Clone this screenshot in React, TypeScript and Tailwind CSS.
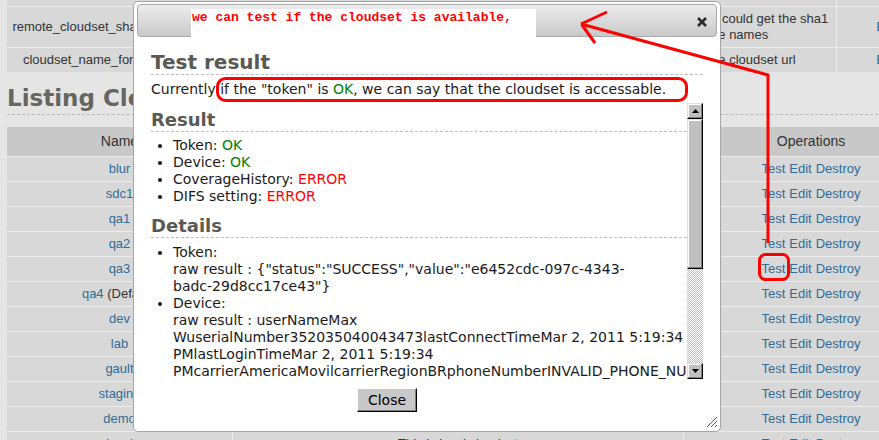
import React from "react";

const cloudsets = [
  { name: "blur" },
  { name: "sdc1" },
  { name: "qa1" },
  { name: "qa2" },
  { name: "qa3" },
  { name: "qa4", note: " (Default)" },
  { name: "dev" },
  { name: "lab" },
  { name: "gault" },
  { name: "staging" },
  { name: "demo" },
  { name: "local", desc: "This is local cloudset" },
];

const cell = "flex items-center justify-center bg-[#d8d8d8]";
const link = "text-[#2e6c99]";

function Scrollbar() {
  const raised =
    "border border-t-[#e0e0e0] border-l-[#e0e0e0] border-r-black border-b-black bg-[#c0c0c0] shadow-[inset_-1px_-1px_#808080,inset_1px_1px_#ffffff]";
  return (
    <div className="flex w-[16px] flex-col">
      <div className={`flex h-[16px] items-center justify-center ${raised}`}>
        <svg width="7" height="4" viewBox="0 0 7 4">
          <polygon points="3.5,0 7,4 0,4" fill="#000" />
        </svg>
      </div>
      <div className={`h-[150px] ${raised}`} />
      <div className="flex-1 bg-[repeating-conic-gradient(#c0c0c0_0%_25%,#ffffff_0%_50%)] bg-[length:2px_2px]" />
      <div className={`flex h-[16px] items-center justify-center ${raised}`}>
        <svg width="7" height="4" viewBox="0 0 7 4">
          <polygon points="0,0 7,0 3.5,4" fill="#000" />
        </svg>
      </div>
    </div>
  );
}

function TestDialog() {
  return (
    <div className="absolute left-[133px] top-px flex h-[431px] w-[588px] flex-col rounded-[5px] border border-[#a6a6a6] bg-white px-[3px] pt-[2px] font-['DejaVu_Sans',Verdana,sans-serif] text-[14px] text-[#1a1a1a]">
      <div className="flex h-[33px] items-center justify-end rounded-[4px] border border-[#aaaaaa] bg-gradient-to-b from-[#ececec] to-[#c9c9c9] pr-[9px]">
        <svg className="mt-[3px]" width="10" height="10" viewBox="0 0 10 10">
          <path d="M1 1L9 9M9 1L1 9" stroke="#2a2a2a" strokeWidth="2.6" />
        </svg>
      </div>

      <div className="flex flex-1 flex-col px-[14px]">
        <h1 className="mt-[13px] border-b border-dashed border-[#bdbdbd] text-[20px] font-bold leading-[24px] text-[#5a5a54]">
          Test result
        </h1>
        <p className="mt-[6px] leading-[17px]">
          Currently if the "token" is <span className="text-[#008000]">OK</span>, we can say that the cloudset is accessable.
        </p>

        <div className="mt-[5px] flex h-[276px]">
          <div className="min-w-0 flex-1 overflow-hidden pt-[6px] leading-[17px]">
            <h2 className="border-b border-dashed border-[#bdbdbd] text-[18px] font-bold leading-[22px] text-[#5a5a54]">Result</h2>
            <ul className="mt-[5px] list-disc pl-[22px]">
              <li>
                Token: <span className="text-[#008000]">OK</span>
              </li>
              <li>
                Device: <span className="text-[#008000]">OK</span>
              </li>
              <li>
                CoverageHistory: <span className="text-[#ff0000]">ERROR</span>
              </li>
              <li>
                DIFS setting: <span className="text-[#ff0000]">ERROR</span>
              </li>
            </ul>
            <h2 className="mt-[10px] border-b border-dashed border-[#bdbdbd] text-[18px] font-bold leading-[22px] text-[#5a5a54]">Details</h2>
            <ul className="mt-[6px] list-disc whitespace-nowrap pl-[22px]">
              <li>
                Token:
                <br />
                raw result : {'{"status":"SUCCESS","value":"e6452cdc-097c-4343-'}
                <br />
                {'badc-29d8cc17ce43"}'}
              </li>
              <li>
                Device:
                <br />
                raw result : userNameMax
                <br />
                WuserialNumber352035040043473lastConnectTimeMar 2, 2011 5:19:34
                <br />
                PMlastLoginTimeMar 2, 2011 5:19:34
                <br />
                PMcarrierAmericaMovilcarrierRegionBRphoneNumberINVALID_PHONE_NUMBER
              </li>
            </ul>
          </div>
          <Scrollbar />
        </div>

        <div className="mt-[9px]">
          <button className="ml-[206px] h-[24px] w-[60px] border border-t-white border-l-white border-r-black border-b-black bg-[#c8c8c8] text-[14px] text-black shadow-[inset_-1px_-1px_#808080]">
            Close
          </button>
        </div>
      </div>

      <svg className="absolute bottom-[3px] right-[2px]" width="12" height="12" viewBox="0 0 12 12">
        <path d="M11 1L1 11M11 5L5 11M11 9L9 11" stroke="#555" strokeWidth="1" />
      </svg>
    </div>
  );
}

function Annotations() {
  return (
    <>
      <div className="absolute left-[191px] top-[9px] h-[28px] w-[345px] bg-white pl-px pt-px font-['Liberation_Mono',monospace] text-[13px] font-bold leading-[15px] text-[#ff0000]">
        we can test if the cloudset is available,
      </div>
      <svg className="pointer-events-none absolute left-0 top-0" width="879" height="440">
        <g stroke="#ff0000" strokeWidth="3" fill="none" strokeLinejoin="round">
          <rect x="217.5" y="78.5" width="469" height="22" rx="8" />
          <polyline points="581,24 768,75 768,243" />
          <line x1="581" y1="24" x2="607" y2="12" />
          <line x1="582" y1="25" x2="595" y2="43" />
          <rect x="759.5" y="254.5" width="29" height="25" rx="6" />
        </g>
      </svg>
    </>
  );
}

export default function App() {
  return (
    <div className="relative h-[440px] w-[879px] overflow-hidden bg-[#e5e5e5] font-['Liberation_Sans',Arial,sans-serif] text-[13px] text-[#333]">
      <div className="w-[945px] px-[7px]">
        <div className="grid grid-cols-[164px_664px_1fr] gap-px bg-[#ececec]">
          <div className={`h-[6px] ${cell}`} />
          <div className={`h-[6px] ${cell}`} />
          <div className={`h-[6px] ${cell}`} />

          <div className={`h-[40px] ${cell}`}>remote_cloudset_sha1_url</div>
          <div className="flex h-[40px] flex-col justify-center bg-[#d8d8d8] pl-[521px] leading-[16px]">
            <span>then could get the sha1</span>
            <span>of the names</span>
          </div>
          <div className={`h-[40px] ${cell}`}>
            <span className={link}>Edit</span>
          </div>

          <div className={`h-[24px] ${cell}`}>cloudset_name_format</div>
          <div className="flex h-[24px] items-center bg-[#d8d8d8] pl-[521px]">of the cloudset url</div>
          <div className={`h-[24px] ${cell}`}>
            <span className={link}>Edit</span>
          </div>
        </div>

        <h1 className="mt-[12px] border-b border-dashed border-[#b8b8b8] pb-[2px] font-['DejaVu_Sans',Verdana,sans-serif] text-[23px] font-bold leading-[28px] text-[#66665f]">
          Listing Cloudsets
        </h1>

        <div className="mt-[12px] grid grid-cols-[225px_450px_1fr] gap-px bg-[#ececec]">
          <div className="flex h-[29px] items-center justify-center bg-[#c8c8c8] text-[14px]">Name</div>
          <div className="flex h-[29px] items-center justify-center bg-[#c8c8c8] text-[14px]">Description</div>
          <div className="flex h-[29px] items-center justify-center bg-[#c8c8c8] text-[14px]">Operations</div>
          {cloudsets.map((c) => (
            <React.Fragment key={c.name}>
              <div className={`h-[24px] ${cell}`}>
                <span className={link}>{c.name}</span>
                {c.note && <span className="whitespace-pre">{c.note}</span>}
              </div>
              <div className={`h-[24px] ${cell}`}>{c.desc}</div>
              <div className={`h-[24px] gap-[4px] ${cell}`}>
                <span className={link}>Test</span>
                <span className={link}>Edit</span>
                <span className={link}>Destroy</span>
              </div>
            </React.Fragment>
          ))}
        </div>
      </div>

      <TestDialog />
      <Annotations />
    </div>
  );
}
